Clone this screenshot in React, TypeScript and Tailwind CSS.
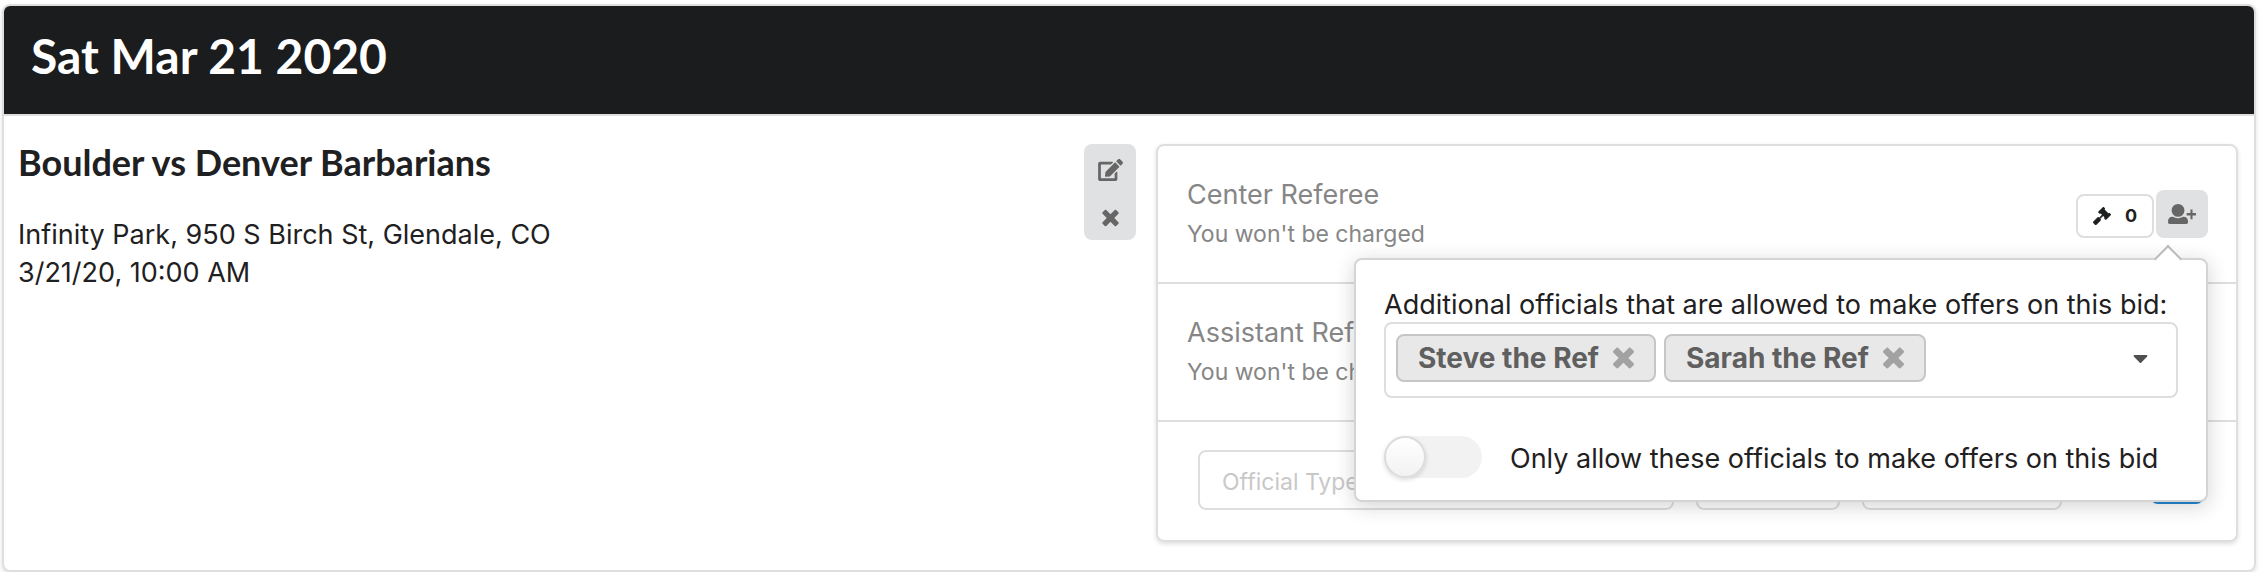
import { FaCaretDown, FaEdit, FaGavel } from "react-icons/fa";

type Position = {
  name: string;
  note: string;
};

const positions: Position[] = [
  { name: "Center Referee", note: "You won't be charged" },
  { name: "Assistant Referee", note: "You won't be charged" },
];

const officials = ["Steve the Ref", "Sarah the Ref"];

function CloseIcon({ className }: { className?: string }) {
  return (
    <svg viewBox="0 0 384 512" fill="currentColor" className={className} aria-hidden="true">
      <path d="M323.1 441l53.9-53.9c9.4-9.4 9.4-24.5 0-33.9L279.8 256l97.2-97.2c9.4-9.4 9.4-24.5 0-33.9L323.1 71c-9.4-9.4-24.5-9.4-33.9 0L192 168.2 94.8 71c-9.4-9.4-24.5-9.4-33.9 0L7 124.9c-9.4 9.4-9.4 24.5 0 33.9l97.2 97.2L7 353.2c-9.4 9.4-9.4 24.5 0 33.9L60.9 441c9.4 9.4 24.5 9.4 33.9 0l97.2-97.2 97.2 97.2c9.4 9.3 24.5 9.3 33.9 0z" />
    </svg>
  );
}

function UserPlusIcon({ className }: { className?: string }) {
  return (
    <svg viewBox="0 0 81 58" fill="currentColor" className={className} aria-hidden="true">
      <circle cx="29" cy="18.5" r="18.5" />
      <path d="M13 37c4 0 7 4 16 4s12-4 16-4c8 0 13 6 13 13v3c0 3-2 5-5 5H5c-3 0-5-2-5-5v-3c0-7 5-13 13-13z" />
      <path d="M65 16h6v10h10v7H71v11h-6V33H54v-7h11z" />
    </svg>
  );
}

function OfficialsPopup() {
  return (
    <div className="absolute right-0 top-[68px] z-10 w-[854px] rounded-lg border-2 border-[#d4d4d5] bg-white px-7 pb-5 pt-7 text-[27px] text-[#1f2021] shadow-[0_4px_20px_0_rgba(34,36,38,0.2)]">
      <div className="absolute -top-[11px] right-[28px] size-5 rotate-45 border-l-2 border-t-2 border-[#bababc] bg-white" />
      <label htmlFor="officials" className="block whitespace-nowrap leading-[34px]">
        Additional officials that are allowed to make offers on this bid:
      </label>
      <div className="flex h-[76px] items-start rounded-lg border-2 border-[#dededf] pl-[10px] pr-7 pt-[10px]">
        <div className="flex gap-2">
          {officials.map((name) => (
            <span
              key={name}
              className="flex h-12 items-center gap-[14px] whitespace-nowrap rounded-lg border-2 border-[#c6c6c7] bg-[#e8e8e8] px-5 text-[28px] font-bold leading-7 text-[#5f5f5f]"
            >
              {name}
              <button type="button" aria-label={`Remove ${name}`} className="text-[#a2a2a2]">
                <CloseIcon className="h-7 w-[21px]" />
              </button>
            </span>
          ))}
        </div>
        <input id="officials" className="h-12 min-w-0 flex-1 outline-none" />
        <button type="button" aria-label="Show officials" className="flex h-12 items-center text-[#505050]">
          <FaCaretDown className="h-6 w-[15px]" />
        </button>
      </div>
      <label className="mt-9 flex items-center gap-7 whitespace-nowrap leading-[42px]">
        <input
          type="checkbox"
          className="h-[42px] w-[98px] shrink-0 appearance-none rounded-full bg-[#f2f2f2] before:block before:size-[42px] before:rounded-full before:border-2 before:border-[#dcdcdd] before:bg-linear-to-b before:from-white before:to-[#f2f2f2] before:shadow-[0_2px_4px_0_rgba(34,36,38,0.15)]"
        />
        <span className="pt-1">Only allow these officials to make offers on this bid</span>
      </label>
    </div>
  );
}

function PositionRow({ position, open }: { position: Position; open?: boolean }) {
  return (
    <div className="flex h-[138px] items-start justify-between border-b-2 border-[#dededf] pl-[29px] pr-7">
      <div className="pt-[30px] text-[#868686]">
        <p className="text-[27px] leading-[38px]">{position.name}</p>
        <p className="text-[23px] leading-10">{position.note}</p>
      </div>
      <div className="relative flex items-end gap-[2px] pt-11">
        <button
          type="button"
          className="flex h-11 w-[78px] items-center justify-center gap-[14px] rounded-lg border-2 border-[#dededf] text-lg font-bold text-[#1f2021]"
        >
          <FaGavel className="size-[18px]" />0
        </button>
        <div className="relative">
          <button
            type="button"
            aria-label="Add officials"
            className="flex h-12 w-[52px] items-center justify-center rounded-lg bg-[#e0e1e2] text-[#666]"
          >
            <UserPlusIcon className="h-5 w-7" />
          </button>
          {open && <OfficialsPopup />}
        </div>
      </div>
    </div>
  );
}

export default function App() {
  return (
    <div className="bg-white pl-[2px] pr-[6px] pt-1 font-['Inter','Liberation_Sans',sans-serif] text-[#1f2021]">
      <section className="rounded-lg border-2 border-[#dededf] shadow-[0_2px_4px_0_rgba(34,36,38,0.15)]">
        <header className="rounded-t-md border-b-2 border-[#dededf] bg-[#1b1c1d] px-[27px] pb-8 pt-6">
          <h1 className="font-['Lato',sans-serif] text-5xl font-bold leading-[52px] text-white">Sat Mar 21 2020</h1>
        </header>
        <div className="grid grid-cols-[559fr_541fr] gap-5 pb-7 pl-[14px] pr-4 pt-7">
          <div className="flex items-start justify-between">
            <div>
              <h2 className="font-['Lato',sans-serif] text-4xl font-bold leading-9">Boulder vs Denver Barbarians</h2>
              <p className="mt-9 text-[27px] leading-[38px]">Infinity Park, 950 S Birch St, Glendale, CO</p>
              <p className="text-[27px] leading-[38px]">3/21/20, 10:00 AM</p>
            </div>
            <div className="flex w-[52px] flex-col overflow-hidden rounded-lg bg-[#e0e1e2] text-[#666]">
              <button type="button" aria-label="Edit match" className="flex h-12 items-center justify-center pt-1">
                <FaEdit className="h-[22px] w-[25px]" />
              </button>
              <button type="button" aria-label="Remove match" className="flex h-12 items-center justify-center pt-1">
                <CloseIcon className="h-[22px] w-[17px]" />
              </button>
            </div>
          </div>
          <div className="rounded-lg border-2 border-[#dededf] shadow-[0_2px_4px_0_rgba(34,36,38,0.15)]">
            {positions.map((position, idx) => (
              <PositionRow key={position.name} position={position} open={idx === 0} />
            ))}
            <form className="flex h-[118px] items-start pl-10 pr-8 pt-7">
              <div className="grid flex-1 grid-cols-[119fr_36fr_50fr] gap-[22px]">
                <input
                  aria-label="Official type"
                  placeholder="Official Type"
                  className="h-[60px] min-w-0 rounded-lg border-2 border-[#dededf] px-[22px] pt-1 text-[23px] placeholder:text-[#c8c8c8]"
                />
                <input aria-label="Quantity" className="h-[60px] min-w-0 rounded-lg border-2 border-[#dededf] px-[22px] text-[23px]" />
                <input aria-label="Payment" className="h-[60px] min-w-0 rounded-lg border-2 border-[#dededf] px-[22px] text-[23px]" />
              </div>
              <button type="button" aria-label="Add position" className="ml-[88px] mt-[6px] h-12 w-[54px] rounded-lg bg-[#2185d0]" />
            </form>
          </div>
        </div>
      </section>
    </div>
  );
}
